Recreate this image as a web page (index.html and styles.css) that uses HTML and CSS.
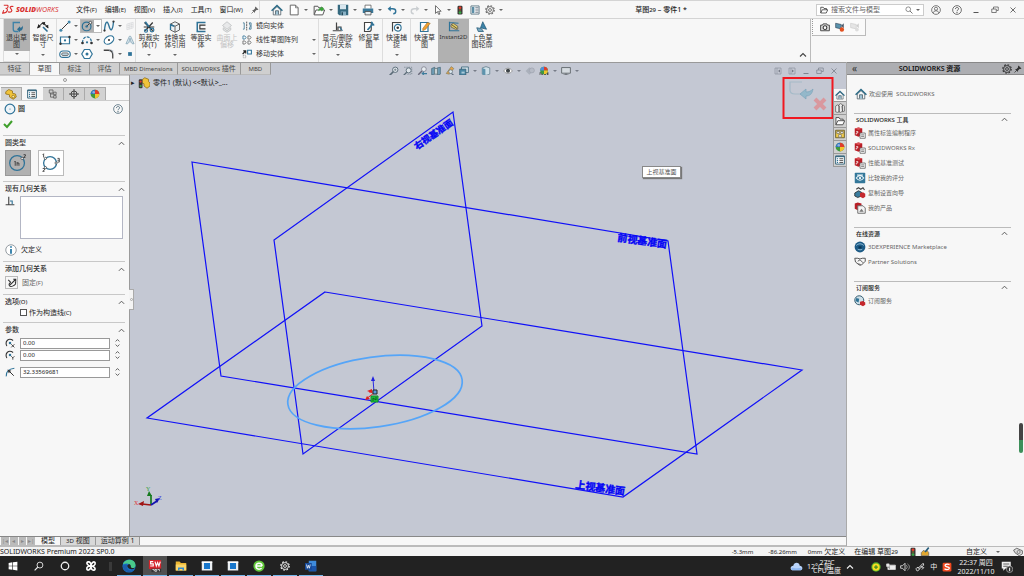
FILE: index.html
```html
<!DOCTYPE html>
<html lang="zh-CN">
<head>
<meta charset="utf-8">
<title>SOLIDWORKS Premium 2022</title>
<link rel="stylesheet" href="styles.css">
</head>
<body>
<svg class="defs" aria-hidden="true">
  <symbol id="home" viewBox="0 0 16 16"><path d="M3 8v6.500h10V8L8 3.500z" fill="#f4f6f7" stroke="#4a5860"/><path d="M.8 9L8 2l7.200 7" fill="none" stroke="#2b6a86" stroke-width="2"/><path d="M6 14V9h4v5" fill="#9fc4d6" stroke="#4a5860"/></symbol>
  <symbol id="new" viewBox="0 0 16 16"><path d="M3 1.500h7l3.500 3.500v9.500H3z" fill="#fff" stroke="#666" stroke-width="1.300"/><path d="M10 1.500V5h3.500" fill="none" stroke="#666"/></symbol>
  <symbol id="open" viewBox="0 0 16 16"><path d="M1.500 14V3h5l1 2H13v3" fill="#f6f6f6" stroke="#555" stroke-width="1.300"/><path d="M1.500 14.500L4 8h11.500L13 14.500z" fill="#fff" stroke="#555" stroke-width="1.300"/><path d="M7 10c0-4 2-5 4-5V3l4 3.500L11 10V8c-2 0-3 .5-4 2z" fill="#3aa53a"/></symbol>
  <symbol id="save" viewBox="0 0 16 16"><path d="M1 1h14v14H3l-2-2z" fill="#35697f"/><path d="M4 1h8v6H4z" fill="#d8e6ee"/><path d="M5 10h7v5H5z" fill="#8ab1c5"/><path d="M6 11h2v4H6z" fill="#234a5b"/></symbol>
  <symbol id="print" viewBox="0 0 16 16"><path d="M4 6V1.500h8V6" fill="#fff" stroke="#555"/><path d="M1 6h14v6H1z" fill="#3a7899"/><path d="M4 10h8v4.500H4z" fill="#e7f0f4" stroke="#444"/></symbol>
  <symbol id="undo" viewBox="0 0 16 16"><path d="M3 6h6c4 0 5 2 5 4s-1 4-4 4" fill="none" stroke="currentColor" stroke-width="2.200"/><path d="M1 6l5-4.500v9z" fill="currentColor"/></symbol>
  <symbol id="redo" viewBox="0 0 16 16"><path d="M13 6H7c-4 0-5 2-5 4s1 4 4 4" fill="none" stroke="#c9cdd0" stroke-width="2.200"/><path d="M15 6l-5-4.500v9z" fill="#c9cdd0"/></symbol>
  <symbol id="cursor" viewBox="0 0 16 16"><path d="M4 1l9 9H9l2 4.500-2 .5-2-4.500-3 3z" fill="#fff" stroke="#444" stroke-width="1.200"/></symbol>
  <symbol id="light" viewBox="0 0 16 16"><rect x="4" y="1" width="8" height="14" rx="2" fill="#3b3735"/><circle cx="8" cy="4.500" r="2.200" fill="#e33b2a"/><circle cx="8" cy="8" r="1.500" fill="#776a30"/><circle cx="8" cy="12" r="2.200" fill="#3aa545"/></symbol>
  <symbol id="options" viewBox="0 0 16 16"><path d="M1.500 1.500h13v13h-13z" fill="#fff" stroke="#55707e" stroke-width="1.400"/><path d="M3 3h4v10H3z" fill="#5c8ea6"/><path d="M8.500 4.500h5M8.500 8h5M8.500 11.500h5" stroke="#456" stroke-width="1.300"/></symbol>
  <symbol id="gear" viewBox="0 0 16 16"><circle cx="8" cy="8" r="5.500" fill="none" stroke="currentColor" stroke-width="1.400"/><circle cx="8" cy="8" r="6.800" fill="none" stroke="currentColor" stroke-width="1.800" stroke-dasharray="2.700 2.640"/><circle cx="8" cy="8" r="2.300" fill="none" stroke="currentColor" stroke-width="1.400"/></symbol>
  <symbol id="pin" viewBox="0 0 16 16"><path d="M9 1l6 6-2 1-2 0-3 3v3L2 8h3l3-3V3z" fill="currentColor"/><path d="M1 15l5-5" stroke="currentColor" stroke-width="1.500"/></symbol>
  <symbol id="exit" viewBox="0 0 16 16"><path d="M12 2H3v9c0 2 1 3 3 3h4" fill="none" stroke="#3d82a8" stroke-width="1.800"/><path d="M8 11l4-4v2c2 0 3-1 4-3 0 5-1 7-4 7v2z" fill="#2d6e92"/></symbol>
  <symbol id="dim" viewBox="0 0 16 16"><path d="M1 9l7-7 7 7" fill="none" stroke="#333" stroke-width="1.400"/><path d="M0 10l2-6 3 4zM6 3l5-2-1 5zM11 7l4-2v5z" fill="#222"/><path d="M8 8l6 6" stroke="#2d6e92" stroke-width="2.200"/></symbol>
  <symbol id="line" viewBox="0 0 16 16"><path d="M2 14L14 2" stroke="#333" stroke-width="1.300"/><circle cx="2.500" cy="13.500" r="2" fill="#4689ac"/><circle cx="13.500" cy="2.500" r="2" fill="#4689ac"/></symbol>
  <symbol id="circle" viewBox="0 0 16 16"><circle cx="8" cy="8" r="6.500" fill="#eef4f8" stroke="#2f7398" stroke-width="1.600"/><circle cx="8" cy="8" r=".8" fill="#2f7398"/></symbol>
  <symbol id="circle-r" viewBox="0 0 16 16"><circle cx="7.500" cy="8.500" r="5.800" fill="none" stroke="#2f7398" stroke-width="1.600"/><path d="M7.500 8.500l5-5" stroke="#333" stroke-width="1.200"/><circle cx="7.500" cy="8.500" r="1.600" fill="#2f7398"/><circle cx="12.500" cy="3.500" r="1.700" fill="#fff" stroke="#333"/></symbol>
  <symbol id="spline" viewBox="0 0 16 16"><path d="M2 14C3 1 6 0 8 8s5 7 6-6" fill="none" stroke="#2f7398" stroke-width="1.800"/><circle cx="2" cy="14" r="1.500" fill="#333"/><circle cx="14" cy="2" r="1.500" fill="#333"/></symbol>
  <symbol id="grid" viewBox="0 0 16 16"><path d="M3 5l10-3v9L3 14zM6.500 4v9M10 3v9M3 8l10-3M3 11l10-3" fill="none" stroke="#d3d6d8" stroke-width="1"/></symbol>
  <symbol id="rect" viewBox="0 0 16 16"><path d="M2 4h12v9H2z" fill="#fff" stroke="#2f7398" stroke-width="1.600"/><circle cx="2" cy="13" r="1.600" fill="#333"/><circle cx="14" cy="4" r="1.600" fill="#333"/><circle cx="8" cy="8.500" r="1.500" fill="#2f7398"/></symbol>
  <symbol id="arc" viewBox="0 0 16 16"><path d="M2 12C2 1 14 1 14 12" fill="none" stroke="#2f7398" stroke-width="1.600" stroke-dasharray="4 1.500"/><circle cx="2" cy="12" r="1.800" fill="#333"/><circle cx="14" cy="12" r="1.800" fill="#333"/><circle cx="8" cy="11" r="1.500" fill="#2f7398"/></symbol>
  <symbol id="ellipse" viewBox="0 0 16 16"><ellipse cx="8" cy="8" rx="7" ry="4.800" transform="rotate(-35 8 8)" fill="#fff" stroke="#2f7398" stroke-width="1.600"/><circle cx="8" cy="8" r="1.400" fill="#333"/></symbol>
  <symbol id="letter" viewBox="0 0 16 16"><path d="M1.500 14L7 2h2l5.500 12h-3l-1-3h-5l-1 3zM6.500 8.500h3L8 5z" fill="#dfeaf0" stroke="#6b93a8"/></symbol>
  <symbol id="slot" viewBox="0 0 16 16"><rect x="1" y="4" width="14" height="8.500" rx="4.200" fill="#fff" stroke="#2f7398" stroke-width="1.500"/><rect x="3.500" y="6.500" width="9" height="3.500" rx="1.700" fill="#b9d0dc" stroke="#555"/></symbol>
  <symbol id="poly" viewBox="0 0 16 16"><path d="M4.500 2h7L15 8l-3.500 6h-7L1 8z" fill="#fff" stroke="#2f7398" stroke-width="1.600"/><circle cx="8" cy="8" r="2" fill="#2f7398"/></symbol>
  <symbol id="fillet" viewBox="0 0 16 16"><path d="M1 3h6c5 0 6 3 6 6v5" fill="none" stroke="#444" stroke-width="1.700"/><path d="M8 3h5v5" fill="none" stroke="#9ab" stroke-dasharray="1.500 1"/></symbol>
  <symbol id="point" viewBox="0 0 16 16"><path d="M5 5h6v6H5z" fill="#2f7398"/></symbol>
  <symbol id="trim" viewBox="0 0 16 16"><path d="M2 2l11 11M13 2L3 13M1 8h14" stroke="#333" stroke-width="1.600"/><circle cx="4" cy="13" r="2" fill="none" stroke="#2f7398" stroke-width="1.600"/><circle cx="12" cy="12" r="2.500" fill="none" stroke="#2f7398" stroke-width="1.600"/><path d="M3 1l5 7" stroke="#2f7398" stroke-width="2.400"/></symbol>
  <symbol id="cube" viewBox="0 0 16 16"><path d="M2 4l6-3 6 3v8l-6 3-6-3z" fill="#eef2f4" stroke="#555" stroke-width="1.200"/><path d="M2 4l6 3 6-3M8 7v8" fill="none" stroke="#555" stroke-width="1.200"/><path d="M2 12V5l5 2" fill="none" stroke="#2f7398" stroke-width="1.800"/></symbol>
  <symbol id="offset" viewBox="0 0 16 16"><path d="M14 2H3v12h11" fill="none" stroke="#2f7398" stroke-width="2"/><path d="M14 5.500H6.500v5H14" fill="none" stroke="#333" stroke-width="1.500"/></symbol>
  <symbol id="surf" viewBox="0 0 16 16"><path d="M8 1l6 5-6 5-6-5zM3 9l5 4 5-4v3l-5 3-5-3z" fill="#e8e9ea" stroke="#c5c7c9" stroke-width="1.300"/></symbol>
  <symbol id="mirror" viewBox="0 0 16 16"><path d="M1.500 3h2v10h-2M14.500 3h-3l2 5-2 5h3z" fill="#fff" stroke="#3f7793" stroke-width="1.400"/><path d="M7.500 1v14" stroke="#444" stroke-width="1.400" stroke-dasharray="3 1"/></symbol>
  <symbol id="pattern" viewBox="0 0 16 16"><g fill="none" stroke="#666" stroke-width="1.300"><path d="M1.500 1.500h3l2 2.500-2 2.500h-3z" stroke="#2f7398"/><path d="M9.500 1.500h3l2 2.500-2 2.500h-3zM1.500 9.500h3l2 2.500-2 2.500h-3zM9.500 9.500h3l2 2.500-2 2.500h-3z"/></g></symbol>
  <symbol id="move" viewBox="0 0 16 16"><path d="M9 2h6v6H9z" fill="#fff" stroke="#2f7398" stroke-width="1.700"/><path d="M1 8l4-4M2 3h4v4" fill="none" stroke="#222" stroke-width="1.800"/><path d="M2 10h4v4H2z" fill="none" stroke="#777" stroke-dasharray="1.500 1"/></symbol>
  <symbol id="relate" viewBox="0 0 16 16"><path d="M6 2v10M1 13h12M8 12V8h4v4" fill="none" stroke="#444" stroke-width="1.600"/><path d="M10 8l4 5" stroke="#2f7398" stroke-width="1.500"/></symbol>
  <symbol id="perp" viewBox="0 0 16 16"><path d="M6 1v13M1 14h14" stroke="#444" stroke-width="1.800"/><path d="M8 8h3.500v5" fill="none" stroke="#2f7398" stroke-width="1.800"/></symbol>
  <symbol id="repair" viewBox="0 0 16 16"><path d="M2 2h9v9c0 2-1 3-3 3H2z" fill="#fff" stroke="#444" stroke-width="1.500"/><path d="M6 12l7-8M12 1a3 3 0 0 0 3 4" fill="none" stroke="#2f7398" stroke-width="2.400"/></symbol>
  <symbol id="snap" viewBox="0 0 16 16"><path d="M2 14V2h12" fill="none" stroke="#444" stroke-width="1.500"/><circle cx="9" cy="9" r="4.500" fill="#fff" stroke="#2f7398" stroke-width="1.500"/><circle cx="9" cy="9" r="1.700" fill="#333"/></symbol>
  <symbol id="rapid" viewBox="0 0 16 16"><path d="M2 2h10v12H2z" fill="#fff" stroke="#2f7398" stroke-width="1.600"/><path d="M5 10l6-8 4 1-6 8-4 2z" fill="#f0a030" stroke="#8a5b20" stroke-width=".6"/></symbol>
  <symbol id="instant" viewBox="0 0 16 16"><path d="M2 1v12h13M2 2l12 1" fill="none" stroke="#2f7398" stroke-width="1.600"/><path d="M4 5l3-2 6 4v4l-3 0-6-3z" fill="#e5cd64" stroke="#555"/><path d="M5 5l7 5" stroke="#333"/></symbol>
  <symbol id="shade" viewBox="0 0 16 16"><path d="M9 1l5 10-8-2z" fill="#3c83a8" stroke="#235a78"/><path d="M1 9l6 1 3 4H3z" fill="#78a8bf" stroke="#235a78"/></symbol>
  <symbol id="folder" viewBox="0 0 16 16"><path d="M1.500 14V2.500h5L8 5h5v3" fill="#fff" stroke="currentColor" stroke-width="1.400"/><path d="M1.500 14L4.500 7.500h11L12.500 14z" fill="#fff" stroke="currentColor" stroke-width="1.400"/></symbol>
  <symbol id="zoomlens" viewBox="0 0 16 16"><circle cx="6.500" cy="6.500" r="4.700" fill="none" stroke="currentColor" stroke-width="1.400"/><path d="M10 10l5 5" stroke="currentColor" stroke-width="1.800"/></symbol>
  <symbol id="zoomfit" viewBox="0 0 16 16"><circle cx="10" cy="6" r="4.300" fill="#dfe5ea" stroke="#5a6b77" stroke-width="1.500"/><path d="M7 9l-6 6" stroke="#5a6b77" stroke-width="2.400"/><path d="M8 6h4M10 4v4" stroke="#5a6b77"/></symbol>
  <symbol id="zoomarea" viewBox="0 0 16 16"><path d="M2 2h12v11H6" fill="none" stroke="#5a6b77" stroke-dasharray="2 1.500"/><circle cx="9" cy="7" r="4" fill="#dfe5ea" stroke="#5a6b77" stroke-width="1.400"/><path d="M6 10l-5 5" stroke="#5a6b77" stroke-width="2.200"/></symbol>
  <symbol id="user" viewBox="0 0 16 16"><circle cx="8" cy="8" r="7" fill="none" stroke="#555" stroke-width="1.200"/><circle cx="8" cy="6" r="2.500" fill="none" stroke="#555" stroke-width="1.200"/><path d="M3.500 13c0-5 9-5 9 0" fill="none" stroke="#555" stroke-width="1.200"/></symbol>
  <symbol id="help" viewBox="0 0 16 16"><circle cx="8" cy="8" r="7" fill="none" stroke="currentColor" stroke-width="1.300"/><path d="M5.500 6.500C5.500 3 10.800 3.300 10.500 6.300 10.400 8 8 8 8 10" fill="none" stroke="currentColor" stroke-width="1.500"/><circle cx="8" cy="12.200" r="1.100" fill="currentColor"/></symbol>
  <symbol id="min" viewBox="0 0 16 16"><path d="M3 13h10" stroke="currentColor" stroke-width="2"/></symbol>
  <symbol id="restore" viewBox="0 0 16 16"><path d="M1.500 6h9v7h-9zM5 6V2h9.500v7H11" fill="none" stroke="currentColor" stroke-width="1.500"/></symbol>
  <symbol id="close" viewBox="0 0 16 16"><path d="M3 3l10 10M13 3L3 13" stroke="currentColor" stroke-width="1.700"/></symbol>
  <symbol id="up" viewBox="0 0 16 16"><path d="M2 11l6-6 6 6" fill="none" stroke="currentColor" stroke-width="2.200"/></symbol>
  <symbol id="camera" viewBox="0 0 16 16"><path d="M1 5h3l1-2h6l1 2h3v9H1z" fill="#ddd" stroke="#444" stroke-width="1.500"/><circle cx="8" cy="9" r="3" fill="#fff" stroke="#333" stroke-width="1.700"/></symbol>
  <symbol id="video" viewBox="0 0 16 16"><path d="M1 2l9 2v7l-9-2z" fill="#5a93ae" stroke="#345"/><path d="M10 6l4-4v8z" fill="#456"/><circle cx="11" cy="12" r="3.500" fill="#e2501f"/></symbol>
  <symbol id="video-off" viewBox="0 0 16 16"><path d="M1 2l9 2v7l-9-2z" fill="#e5e5e5" stroke="#ccc"/><path d="M10 6l4-4v8z" fill="#ccc"/><circle cx="11" cy="12" r="3" fill="#ddd"/></symbol>
  <symbol id="part" viewBox="0 0 16 16"><path d="M1 5l4-3 5 2v3l4 1 1 4-4 3-5-3V9L1 8z" fill="#f0c33a" stroke="#8f6c14"/><circle cx="11" cy="11.500" r="1.800" fill="#fbe9a4" stroke="#8f6c14"/></symbol>
  <symbol id="part-light" viewBox="0 0 16 16"><path d="M5 4l4-3 5 2v3l2 2v4l-4 3-4-3V9L5 8z" fill="#f0c33a" stroke="#8f6c14"/><rect x="1" y="3" width="5" height="12" rx="1.500" fill="#3b3735"/><circle cx="3.500" cy="6" r="1.500" fill="#e33b2a"/><circle cx="3.500" cy="12" r="1.500" fill="#3aa545"/></symbol>
  <symbol id="props" viewBox="0 0 16 16"><path d="M1 1.500h14v13H1z" fill="#fff" stroke="#3c6a80" stroke-width="1.600"/><path d="M1 1.500h14v2H1z" fill="#3c6a80"/><path d="M3 6h2M3 9h2M3 12h2" stroke="#2f7398" stroke-width="1.800"/><path d="M7 6h6M7 9h6M7 12h6" stroke="#333" stroke-width="1.300"/></symbol>
  <symbol id="config" viewBox="0 0 16 16"><path d="M2 1.500h6v5H2zM9 5h4v4H9zM9 10.500h4v4H9zM4 6.500V13h5M4 8h5" fill="#ccc" stroke="#555" stroke-width="1.200"/></symbol>
  <symbol id="target" viewBox="0 0 16 16"><circle cx="8" cy="8" r="4.800" fill="none" stroke="#333" stroke-width="1.400"/><path d="M8 0v16M0 8h16" stroke="#333" stroke-width="1.400"/></symbol>
  <symbol id="ball" viewBox="0 0 16 16"><circle cx="8" cy="8" r="7" fill="#3e9a3e"/><path d="M8 8V1a7 7 0 0 1 7 7z" fill="#e13c2b"/><path d="M8 8V1a7 7 0 0 0-7 7z" fill="#3573c4"/><path d="M8 8h7a7 7 0 0 1-7 7z" fill="#f2c52d"/><circle cx="6" cy="5" r="2" fill="#fff" opacity=".45"/></symbol>
  <symbol id="scene" viewBox="0 0 16 16"><path d="M1 10h14v5H1z" fill="#444"/><path d="M2 12h2v2H2zM6 12h2v2H6zM11 12h2v2h-2z" fill="#ddd"/><circle cx="8" cy="7" r="6" fill="#3e9a3e"/><path d="M8 7V1a6 6 0 0 1 6 6z" fill="#e13c2b"/><path d="M8 7V1a6 6 0 0 0-6 6z" fill="#4f8fd8"/><path d="M8 7h6a6 6 0 0 1-6 6z" fill="#f2c52d"/></symbol>
  <symbol id="info" viewBox="0 0 16 16"><circle cx="8" cy="8" r="7" fill="#fff" stroke="#8a9299" stroke-width="1.200"/><path d="M8 6.500V13M8 3v2" stroke="#2a7aa6" stroke-width="2.400"/></symbol>
  <symbol id="fix" viewBox="0 0 16 16"><path d="M2 3l4 4M6 7c-5 3-2 8 3 6s6-5 4-7" fill="none" stroke="#333" stroke-width="1.700"/><path d="M5 11l9-9M10 2h4v4" fill="none" stroke="#333" stroke-width="1.700"/></symbol>
  <symbol id="center-x" viewBox="0 0 16 16"><path d="M3 13C-1 5 6-1 13 4" fill="none" stroke="#333" stroke-width="1.700"/><circle cx="8" cy="8" r="2" fill="#2f7398"/><path d="M10 10l5 5M15 10l-5 5" stroke="#333" stroke-width="1.400"/></symbol>
  <symbol id="center-y" viewBox="0 0 16 16"><path d="M3 13C-1 5 6-1 13 4" fill="none" stroke="#333" stroke-width="1.700"/><circle cx="8" cy="8" r="2" fill="#2f7398"/><path d="M10 10l2.500 2.500L15 10M12.500 12v3.500" fill="none" stroke="#333" stroke-width="1.400"/></symbol>
  <symbol id="radius" viewBox="0 0 16 16"><path d="M2 15C1 8 6 3 15 2" fill="none" stroke="#2f7398" stroke-width="1.800"/><path d="M14 14L6 6" stroke="#333" stroke-width="1.600"/><path d="M4 4l6 2-4 4z" fill="#333"/></symbol>
  <symbol id="section" viewBox="0 0 16 16"><path d="M1 4l5-2v11l-5 1zM10 3l5-1v11l-5 2z" fill="#6f9db5" stroke="#3d5f70"/><path d="M6 4h4v9H6z" fill="#dfe6ea" stroke="#566"/></symbol>
  <symbol id="prev" viewBox="0 0 16 16"><circle cx="11" cy="5" r="3.800" fill="#e7edf1" stroke="#667"/><path d="M8 8l-6 6" stroke="#667" stroke-width="2.200"/><path d="M16 11h-5V8.500L7 12l4 3.500V13h5z" fill="#3d7c9c"/></symbol>
  <symbol id="wand" viewBox="0 0 16 16"><path d="M2 12L10 1l4 3-7 9z" fill="#e8a54a" stroke="#775"/><path d="M7 9l7 6" stroke="#567" stroke-width="1.900"/><circle cx="9" cy="9" r="3" fill="#dce8ef" stroke="#567"/></symbol>
  <symbol id="boxes" viewBox="0 0 16 16"><path d="M4 1.500h11v9H4z" fill="#cfdfe7" stroke="#3c677d" stroke-width="1.300"/><path d="M1 5h10v9.500H1z" fill="#4c88a5" stroke="#2b5266"/><path d="M4 9h5v3H4z" fill="#aac9d8"/></symbol>
  <symbol id="solid" viewBox="0 0 16 16"><path d="M2 3l6-2 6 2v10l-6 2-6-2z" fill="#cfe0e8" stroke="#4b6c7c"/><path d="M2 3l5 2v10l-5-2z" fill="#5e93ad"/></symbol>
  <symbol id="eye" viewBox="0 0 16 16"><path d="M1 8c4-6 10-6 14 0-4 5-10 5-14 0z" fill="#fff" stroke="#777"/><circle cx="8" cy="7.500" r="3.300" fill="#3d4347"/></symbol>
  <symbol id="greyball" viewBox="0 0 16 16"><path d="M7 2l6 6-6 6-6-6z" fill="#aab0bb"/><circle cx="11" cy="7" r="4" fill="#b6bbc6" stroke="#9a9fab"/></symbol>
  <symbol id="screen" viewBox="0 0 16 16"><path d="M1 2.500h14v9H1z" fill="#d5dbe0" stroke="#5d6468" stroke-width="1.400"/><path d="M8 12v2M4 14.500h8" stroke="#5d6468" stroke-width="1.700"/></symbol>
  <symbol id="dock-l" viewBox="0 0 16 16"><path d="M2 2h12v12H2zM6 2v12" fill="none" stroke="#8a8f9b" stroke-width="1.300"/><path d="M12 5v6L8 8z" fill="#777c88"/></symbol>
  <symbol id="dock-r" viewBox="0 0 16 16"><path d="M2 2h12v12H2zM6 2v12" fill="none" stroke="#8a8f9b" stroke-width="1.300"/><path d="M8 5v6l4-3z" fill="#777c88"/></symbol>
  <symbol id="library" viewBox="0 0 16 16"><path d="M1 5l3-2 3 2v9l-3 1-3-1zM6 3l3-2 3 2v10l-3 2-3-1zM11 5l2-2 2 2v8l-3 1z" fill="#eee" stroke="#444"/></symbol>
  <symbol id="palette" viewBox="0 0 16 16"><path d="M1 2h14v12H1z" fill="#efcb4b" stroke="#665a29" stroke-width="1.400"/><path d="M3 4h4v3H3zM9 4h4v3H9zM6 9h4v4H6z" fill="#fff" stroke="#555"/></symbol>
  <symbol id="swtool" viewBox="0 0 16 16"><path d="M1 2l5-1.500L11 2v9l-5 2-5-2z" fill="#b81f27"/><path d="M1 2l5-1.500L11 2 6 4z" fill="#dc5257"/><path d="M3 6h2v2H3v2" fill="none" stroke="#fff"/><path d="M8 8h7v7H8z" fill="#fff" stroke="#666" stroke-width="1.100"/><path d="M9.500 10.500h4M9.500 12.500h4" stroke="#555"/></symbol>
  <symbol id="compare" viewBox="0 0 16 16"><rect x="1" y="1" width="14" height="14" rx="1" fill="#34789a"/><path d="M3 8c3-4 7-4 10 0-3 4-7 4-10 0zM4 4h8" fill="none" stroke="#e7f3f8" stroke-width="1.500"/><circle cx="8" cy="8" r="1.500" fill="#fff"/></symbol>
  <symbol id="copyset" viewBox="0 0 16 16"><path d="M3 3l3-2 3 2 3-2 2 3" fill="none" stroke="#444" stroke-width="1.500"/><path d="M1 8l5-3 4 2v5l-5 2-4-2z" fill="#3a7c9e" stroke="#222"/><path d="M8 8l4-1 3 2v4l-3 2-4-2z" fill="#c5272c"/></symbol>
  <symbol id="products" viewBox="0 0 16 16"><path d="M1 2l4-1.500L10 2v7l-5 2-4-2z" fill="#b81f27"/><path d="M5 5h7l3 3v7H5z" fill="#f3f3f3" stroke="#666" stroke-width="1.200"/><path d="M7 13l3-4 3 4z" fill="#777"/></symbol>
  <symbol id="globe" viewBox="0 0 16 16"><circle cx="8" cy="8" r="7.200" fill="#1d5b86"/><path d="M3 6c3-3 7-3 10 0M5 11c2 1 4 1 6 0" fill="none" stroke="#8dbad6" stroke-width="1.300"/><path d="M6 7h4v3H6z" fill="#0b3655"/></symbol>
  <symbol id="hands" viewBox="0 0 16 16"><path d="M1 3h4l3 1 3-1h4v4l-5 5-3 0-5-4z" fill="#f6f6f6" stroke="#555" stroke-width="1.300"/><path d="M5 7l3-2 4 4M6 10l3 2" fill="none" stroke="#555" stroke-width="1.200"/></symbol>
  <symbol id="subscribe" viewBox="0 0 16 16"><circle cx="7" cy="7" r="6" fill="#cfe0e8" stroke="#345c70" stroke-width="1.300"/><path d="M3 4l4 1-1 5-4-2z" fill="#2e7295"/><path d="M8 9l4-1 3 2v3l-3 2-4-2z" fill="#c5272c"/></symbol>
  <symbol id="win" viewBox="0 0 16 16"><path d="M1 3l6-1v5.500H1zM8 2l7-1v6.500H8zM1 8.500h6V14l-6-1zM8 8.500h7V15l-7-1z" fill="#fff"/></symbol>
  <symbol id="ring" viewBox="0 0 16 16"><circle cx="8" cy="8" r="5" fill="none" stroke="#eee" stroke-width="1.700"/></symbol>
  <symbol id="fan" viewBox="0 0 16 16"><g fill="none" stroke="#fff" stroke-width="2.200"><path d="M8 8C3 8 1 3 4 2.500s4 2 4 5.500zM8 8c0-5 5-7 5.500-4s-2 4-5.500 4zM8 8c5 0 7 5 4 5.500s-4-2-4-5.500zM8 8c0 5-5 7-5.500 4s2-4 5.500-4z"/></g></symbol>
  <symbol id="edge" viewBox="0 0 16 16"><circle cx="8" cy="8" r="7.500" fill="#1772c9"/><path d="M1 6C3-1 15-1 15.500 7c0 4-5 4-6 2 1-3-3-5-8.500-3z" fill="#49c98a"/><path d="M6 8c-1 4 3 7 8 4-5 6-13 2-13-4 2-2 4-2 6-1z" fill="#1c5ca8"/><path d="M6 8c1-3 4-2 4 0s1 3 5 2c-3 3-8 2-9-2z" fill="#222"/></symbol>
  <symbol id="swapp" viewBox="0 0 16 16"><path d="M1 1h14v10l-7 2-7-2z" fill="#d5242b"/><path d="M6 3H3v2.500h3V8H2.500M8 3l1.500 5L11 4l1.500 4L14 3" fill="none" stroke="#fff" stroke-width="1.300"/><path d="M4 11h11v4H4z" fill="#333"/><path d="M5 12h2v2M8 12h2v2H8zM11 12h2v2" fill="none" stroke="#fff" stroke-width=".8"/></symbol>
  <symbol id="explorer" viewBox="0 0 16 16"><path d="M1 2h5l2 2h7v10H1z" fill="#eeb733"/><path d="M1 6h14v8H1z" fill="#fbd66b"/><path d="M4 14v-4h8v4h-2v-2H6v2z" fill="#348cd1"/></symbol>
  <symbol id="appwin" viewBox="0 0 16 16"><path d="M1 2h14v12H1z" fill="#e9eef2"/><path d="M4 4h8v8H4z" fill="#1877cc"/><path d="M1 2h14v2H1z" fill="#fff"/></symbol>
  <symbol id="browser" viewBox="0 0 16 16"><circle cx="8" cy="8" r="7.500" fill="#62c93a"/><path d="M4 8h8M12 8c0-5-8-5-8 0s5 5 7.500 3" fill="none" stroke="#fff" stroke-width="2"/></symbol>
  <symbol id="word" viewBox="0 0 16 16"><path d="M5 1h10v14H5z" fill="#3e8bdc"/><path d="M5 8h10v7H5z" fill="#1b55ab"/><path d="M0 4h9v9H0z" fill="#174a98"/><path d="M2 6l1.200 5L4.500 7l1.300 4L7 6" fill="none" stroke="#fff"/></symbol>
  <symbol id="cloud" viewBox="0 0 20 14"><path d="M5 13C-1 13 0 6 5 6 6-1 15 0 15 6c5 0 6 7 0 7z" fill="#b9d4fa"/><path d="M5 13C1 13 1 9 4 9c5 2 9-1 14 1 0 2-1 3-3 3z" fill="#8fb8f2"/></symbol>
  <symbol id="shield" viewBox="0 0 16 16"><circle cx="8" cy="8" r="7.500" fill="#4fae2c"/><circle cx="8" cy="8" r="5.800" fill="#f7dd21"/><path d="M8 5v6M5 8h6" stroke="#3b8b23" stroke-width="2"/></symbol>
  <symbol id="battery" viewBox="0 0 16 16"><path d="M6 5h9v7H6zM1 3h4v4H1zM3 7v5h3" fill="#eee" stroke="#ddd" stroke-width="1.200"/></symbol>
  <symbol id="sound" viewBox="0 0 16 16"><path d="M1 6h3l4-4v12l-4-4H1z" fill="none" stroke="#ddd" stroke-width="1.400"/><path d="M10 5c2 2 2 4 0 6M12 3c4 3 4 7 0 10" fill="none" stroke="#aaa" stroke-width="1.300"/></symbol>
  <symbol id="link" viewBox="0 0 16 16"><path d="M2 12a2.500 2.500 0 1 1 4 1c-2 2-4 1-4-1zM5 10l8-8 1 3-7 6M9 7l5 2-3 3" fill="none" stroke="#ddd" stroke-width="1.500"/></symbol>
  <symbol id="sogou" viewBox="0 0 16 16"><rect x="1" y="1" width="14" height="14" rx="2" fill="#f1491f"/><path d="M12 4C5 2 3 6 7 7.500s6 1 4 3.500c-2 1.500-5 1-7 0" fill="none" stroke="#fff" stroke-width="2"/></symbol>
  <symbol id="notice" viewBox="0 0 16 16"><path d="M1 1h12v9H6l-3 3v-3H1z" fill="#eee"/><path d="M3 4h8M3 7h6" stroke="#333"/><circle cx="11.500" cy="11" r="4.300" fill="#333" stroke="#aaa"/><path d="M11.500 9v4.500" stroke="#fff" stroke-width="1.300"/></symbol>
  <symbol id="rebuild" viewBox="0 0 16 16"><path d="M2 14V9l4-4 3 3 2-3 3 4v5z" fill="#e2a72e" stroke="#555"/><path d="M8 8l6-7" stroke="#235a78" stroke-width="2.500"/></symbol>
  <symbol id="tag" viewBox="0 0 16 16"><path d="M1 5l5-3 9 4v5l-5 3-7-5z" fill="#ddd" stroke="#555" stroke-width="1.300"/><circle cx="9" cy="8" r="2.500" fill="none" stroke="#555"/></symbol>
</svg>

<header class="titlebar">
  <div class="brand">
    <svg class="ds" viewBox="0 0 20 18"><path d="M3 2h6c2 1 1 4-1 5M6 7c5 0 4 8-5 8l2-5" fill="none" stroke="#d9302f" stroke-width="1.800"/><path d="M19 4c-5-1-7 1-4 4s1 6-5 5" fill="none" stroke="#d9302f" stroke-width="2"/></svg>
    <span class="brand-name"><b>SOLID</b>WORKS</span>
  </div>
  <nav class="menu">
    <button>文件<small>(F)</small></button><button>编辑<small>(E)</small></button><button>视图<small>(V)</small></button><button>插入<small>(I)</small></button><button>工具<small>(T)</small></button><button>窗口<small>(W)</small></button>
    <button aria-label="固定菜单"><svg class="i8 grey"><use href="#pin"/></svg></button>
  </nav>
  <div class="quick">
    <button aria-label="主页"><svg class="i12"><use href="#home"/></svg></button>
    <button class="drop" aria-label="新建"><svg class="i12"><use href="#new"/></svg></button>
    <button class="drop" aria-label="打开"><svg class="i12"><use href="#open"/></svg></button>
    <button class="drop" aria-label="保存"><svg class="i12"><use href="#save"/></svg></button>
    <button class="drop" aria-label="打印"><svg class="i12"><use href="#print"/></svg></button>
    <button class="drop teal" aria-label="撤销"><svg class="i10"><use href="#undo"/></svg></button>
    <button class="drop" aria-label="重做"><svg class="i10"><use href="#redo"/></svg></button>
    <button class="drop" aria-label="选择"><svg class="i10"><use href="#cursor"/></svg></button>
    <button aria-label="重建模型"><svg class="i10"><use href="#light"/></svg></button>
    <button aria-label="文件属性"><svg class="i10"><use href="#options"/></svg></button>
    <button class="drop grey" aria-label="选项"><svg class="i10"><use href="#gear"/></svg></button>
  </div>
  <h1 class="doc-title">草图<small>29</small> – 零件1 *</h1>
  <label class="search"><svg class="i8"><use href="#folder"/></svg><input type="text" placeholder="搜索文件与模型" aria-label="搜索文件与模型"><svg class="i8 grey"><use href="#zoomlens"/></svg><i class="caret"></i></label>
  <div class="window-tools">
    <button aria-label="登录"><svg class="i10"><use href="#user"/></svg></button>
    <button aria-label="帮助"><svg class="i10"><use href="#help"/></svg></button>
    <button aria-label="最小化"><svg class="i8"><use href="#min"/></svg></button>
    <button aria-label="还原"><svg class="i8"><use href="#restore"/></svg></button>
    <button aria-label="关闭"><svg class="i8"><use href="#close"/></svg></button>
  </div>
</header>

<div class="ribbon-row">
  <div class="ribbon">
    <button class="tile exit"><span class="face"><svg class="i12"><use href="#exit"/></svg><span>退出草图</span></span><i class="caret"></i></button>
    <button class="tile"><svg class="i12"><use href="#dim"/></svg><span>智能尺寸</span><i class="caret"></i></button>
    <div class="sketch-grid">
      <button class="drop" aria-label="直线"><svg class="i12"><use href="#line"/></svg></button>
      <button class="drop picked" aria-label="圆"><svg class="i12"><use href="#circle-r"/></svg></button>
      <button class="drop" aria-label="样条曲线"><svg class="i12"><use href="#spline"/></svg></button>
      <button aria-label="基准面"><svg class="i10"><use href="#grid"/></svg></button>
      <button class="drop" aria-label="矩形"><svg class="i12"><use href="#rect"/></svg></button>
      <button class="drop" aria-label="圆弧"><svg class="i12"><use href="#arc"/></svg></button>
      <button class="drop" aria-label="椭圆"><svg class="i12"><use href="#ellipse"/></svg></button>
      <button aria-label="文字"><svg class="i10"><use href="#letter"/></svg></button>
      <button class="drop" aria-label="槽口"><svg class="i12"><use href="#slot"/></svg></button>
      <button aria-label="多边形"><svg class="i12"><use href="#poly"/></svg></button>
      <button class="drop" aria-label="圆角"><svg class="i12"><use href="#fillet"/></svg></button>
      <button aria-label="点"><svg class="i10"><use href="#point"/></svg></button>
    </div>
    <button class="tile"><svg class="i12"><use href="#trim"/></svg><span>剪裁实体(T)</span><i class="caret"></i></button>
    <button class="tile"><svg class="i12"><use href="#cube"/></svg><span>转换实体引用</span><i class="caret"></i></button>
    <button class="tile"><svg class="i12"><use href="#offset"/></svg><span>等距实体</span></button>
    <button class="tile" disabled><svg class="i12"><use href="#surf"/></svg><span>曲面上偏移</span></button>
    <div class="tool-list">
      <button><svg class="i10"><use href="#mirror"/></svg><span>镜向实体</span></button>
      <button><svg class="i10"><use href="#pattern"/></svg><span>线性草图阵列</span><i class="caret"></i></button>
      <button><svg class="i10"><use href="#move"/></svg><span>移动实体</span><i class="caret"></i></button>
    </div>
    <button class="tile wide"><svg class="i12"><use href="#relate"/></svg><span>显示/删除几何关系</span><i class="caret"></i></button>
    <button class="tile"><svg class="i12"><use href="#repair"/></svg><span>修复草图</span></button>
    <button class="tile ruled"><svg class="i12"><use href="#snap"/></svg><span>快速捕捉</span><i class="caret"></i></button>
    <button class="tile ruled"><svg class="i12"><use href="#rapid"/></svg><span>快速草图</span></button>
    <button class="tile on"><svg class="i12"><use href="#instant"/></svg><span>Instant2D</span></button>
    <button class="tile"><svg class="i12"><use href="#shade"/></svg><span>上色草图轮廓</span></button>
    <button class="collapse" aria-label="折叠工具栏"><svg class="i8"><use href="#up"/></svg></button>
  </div>
  <div class="capture">
    <button aria-label="截图"><svg class="i10"><use href="#camera"/></svg></button>
    <button aria-label="录制视频"><svg class="i10"><use href="#video"/></svg></button>
    <button aria-label="停止录制" disabled><svg class="i10"><use href="#video-off"/></svg></button>
  </div>
</div>

<main class="workspace">
  <section class="stage">
    <div class="stage-top">
      <nav class="tabs"><button>特征</button><button class="active">草图</button><button>标注</button><button>评估</button><button><small>MBD Dimensions</small></button><button><small>SOLIDWORKS</small>&nbsp;插件</button><button><small>MBD</small></button></nav>
      <div class="heads-up">
        <button aria-label="整屏显示全图"><svg class="i10"><use href="#zoomfit"/></svg></button>
        <button aria-label="局部放大"><svg class="i10"><use href="#zoomarea"/></svg></button>
        <button aria-label="上一视图"><svg class="i10"><use href="#prev"/></svg></button>
        <button aria-label="剖面视图"><svg class="i10"><use href="#section"/></svg></button>
        <button aria-label="动态注解"><svg class="i10"><use href="#wand"/></svg></button>
        <button class="drop" aria-label="视图定向"><svg class="i10"><use href="#boxes"/></svg></button>
        <button class="drop" aria-label="显示样式"><svg class="i10"><use href="#solid"/></svg></button>
        <button class="drop" aria-label="隐藏项目"><svg class="i10"><use href="#eye"/></svg></button>
        <button aria-label="编辑外观"><svg class="i10"><use href="#greyball"/></svg></button>
        <button class="drop" aria-label="应用布景"><svg class="i10"><use href="#scene"/></svg></button>
        <button class="drop" aria-label="视图设置"><svg class="i10"><use href="#screen"/></svg></button>
      </div>
      <div class="doc-window">
        <button aria-label="左侧停靠"><svg class="i8"><use href="#dock-l"/></svg></button>
        <button aria-label="右侧停靠"><svg class="i8"><use href="#dock-r"/></svg></button>
        <button aria-label="最小化文档"><svg class="i8"><use href="#min"/></svg></button>
        <button aria-label="还原文档"><svg class="i8"><use href="#restore"/></svg></button>
        <button aria-label="关闭文档"><svg class="i8"><use href="#close"/></svg></button>
      </div>
    </div>

    <div class="stage-body">
      <aside class="property">
        <div class="grip"><i></i></div>
        <nav class="panel-tabs">
          <button aria-label="设计树"><svg class="i12"><use href="#part"/></svg></button>
          <button class="active" aria-label="属性"><svg class="i10"><use href="#props"/></svg></button>
          <button aria-label="配置"><svg class="i10"><use href="#config"/></svg></button>
          <button aria-label="尺寸专家"><svg class="i10"><use href="#target"/></svg></button>
          <button aria-label="外观"><svg class="i10"><use href="#ball"/></svg></button>
        </nav>
        <div class="panel-title"><svg class="i12"><use href="#circle"/></svg><h2>圆</h2><button aria-label="面板帮助"><svg class="i10 slate"><use href="#help"/></svg></button></div>
        <button class="confirm" aria-label="确定"><svg class="i10"><path d="M1 5l3 3 5-6" fill="none" stroke="#3fa02c" stroke-width="2"/></svg></button>
        <section class="group">
          <h3>圆类型<svg class="i8"><use href="#up"/></svg></h3>
          <div class="types">
            <button class="on" aria-label="圆"><svg viewBox="0 0 26 26"><circle cx="12" cy="13" r="8" fill="none" stroke="#2f7398" stroke-width="1.400"/><circle cx="17.500" cy="8" r="1.300" fill="#fff" stroke="#333" stroke-width=".7"/><path d="M9 12l1-1v5M12 16v-4M12 13h2v3M19 4h2v1.500l-2 1.500h2" fill="none" stroke="#333" stroke-width=".9"/></svg></button>
            <button aria-label="周边圆"><svg viewBox="0 0 26 26"><circle cx="12" cy="13" r="7" fill="none" stroke="#2f7398" stroke-width="1.400"/><g fill="#fff" stroke="#333" stroke-width=".7"><circle cx="7" cy="8" r="1.200"/><circle cx="7" cy="18" r="1.200"/><circle cx="18.500" cy="13" r="1.200"/></g><path d="M4 4l1-1v4M4 19h2v1.500l-2 1.500h2M20 8h2v4h-2M20 10h2" fill="none" stroke="#333" stroke-width=".9"/></svg></button>
          </div>
        </section>
        <section class="group">
          <h3>现有几何关系<svg class="i8"><use href="#up"/></svg></h3>
          <div class="row top"><svg class="i10"><use href="#perp"/></svg><textarea aria-label="现有几何关系"></textarea></div>
          <p class="row state"><svg class="i12"><use href="#info"/></svg><span>欠定义</span></p>
        </section>
        <section class="group">
          <h3>添加几何关系<svg class="i8"><use href="#up"/></svg></h3>
          <button class="row fix"><span class="fix-icon"><svg class="i10"><use href="#fix"/></svg></span><span>固定<small>(F)</small></span></button>
        </section>
        <section class="group">
          <h3><span>选项<small>(O)</small></span><svg class="i8"><use href="#up"/></svg></h3>
          <label class="check"><input type="checkbox"><span>作为构造线<small>(C)</small></span></label>
        </section>
        <section class="group params">
          <h3>参数<svg class="i8"><use href="#up"/></svg></h3>
          <label class="row"><svg class="i10"><use href="#center-x"/></svg><input type="text" value="0.00" aria-label="X 坐标"><span class="spin"><svg><use href="#up"/></svg><svg class="down"><use href="#up"/></svg></span></label>
          <label class="row"><svg class="i10"><use href="#center-y"/></svg><input type="text" value="0.00" aria-label="Y 坐标"><span class="spin"><svg><use href="#up"/></svg><svg class="down"><use href="#up"/></svg></span></label>
          <label class="row last"><svg class="i10"><use href="#radius"/></svg><input type="text" value="32.33569681" aria-label="半径"><span class="spin"><svg><use href="#up"/></svg><svg class="down"><use href="#up"/></svg></span></label>
        </section>
      </aside>

      <div class="viewport">
        <svg class="model" viewBox="130 75 716 461" role="img" aria-label="草图视图">
          <g fill="none" stroke="#1010f8" stroke-width="1.200">
            <path d="M192 162L668 241L697 454L221 376z"/>
            <path d="M453 112L482 326L303 454L274 240z"/>
            <path d="M325 292L802 370L623 497L147 418z"/>
          </g>
          <ellipse cx="375" cy="392" rx="88" ry="35" transform="rotate(-8 375 392)" fill="none" stroke="#55a5f8" stroke-width="1.700"/>
          <g class="plane-name">
            <text font-size="9" transform="translate(417 150) rotate(-35)">右视基准面</text>
            <text font-size="10" transform="translate(617 241) rotate(8)">前视基准面</text>
            <text font-size="10" transform="translate(575 488) rotate(8)">上视基准面</text>
          </g>
          <g fill="none">
            <path d="M374 392l-1-13" stroke="#2a2ae0"/><path d="M371 381l2-5 2 5z" fill="#2020e0"/>
            <path d="M374 392h-5M374 393l-8 6" stroke="#e02020"/><path d="M372 389l-5 2 5 2zM365 400l2-4 3 3z" fill="#e02020"/>
            <path d="M373 390h4v4h-4z" fill="#5a9be0" stroke="#222"/>
            <path d="M371 396h7v6h-7z" fill="#16c23a" stroke="#148a2c"/><path d="M373 401v-3l3 2v-3" stroke="#145a24"/>
          </g>
          <g stroke-width="1.700">
            <path d="M151 505v-10" stroke="#167a1e"/><path d="M147 496l2-5 3 5z" fill="#167a1e"/>
            <path d="M151 505l-9-1" stroke="#a01414"/><path d="M144 501l-6 3 5 2z" fill="#a01414"/>
            <path d="M151 505l6-4" stroke="#1414b0"/><path d="M155 499l5-1-3 5z" fill="#1414b0"/>
          </g>
          <g class="axis"><text x="146" y="491" fill="#36a044">Y</text><text x="134" y="505" fill="#e03030">X</text><text x="158" y="500" fill="#3030e0">Z</text></g>
          <path d="M802 82h-12v8c0 3 2 4 5 4h6" fill="none" stroke="#a5bac8" stroke-width="1.200"/><path d="M800 94l6-5v3c3 0 5-1 7-3-1 5-3 7-7 7v3z" fill="#94b8ca" stroke="#7da5ba" stroke-width=".7"/>
          <path d="M815 99l10 10M825 99l-10 10" stroke="#d9989e" stroke-width="4"/>
          <path d="M783.500 78h49v40h-49z" fill="none" stroke="#f01820" stroke-width="2"/>
        </svg>
        <button class="crumb"><span>▸</span><svg class="i12"><use href="#part-light"/></svg>零件1 (默认) &lt;&lt;默认&gt;_...</button>
        <button class="edge-grip" aria-label="隐藏面板"><i></i></button>
        <div class="tooltip" role="tooltip">上视基准面</div>
        <nav class="side-tabs">
          <button class="active" aria-label="资源"><svg class="i10"><use href="#home"/></svg></button>
          <button aria-label="设计库"><svg class="i10"><use href="#library"/></svg></button>
          <button aria-label="文件探索器"><svg class="i10"><use href="#folder"/></svg></button>
          <button aria-label="视图调色板"><svg class="i10"><use href="#palette"/></svg></button>
          <button aria-label="外观布景"><svg class="i10"><use href="#ball"/></svg></button>
          <button aria-label="自定义属性"><svg class="i10"><use href="#props"/></svg></button>
        </nav>
      </div>
    </div>

    <nav class="model-tabs">
      <div class="nav-arrows"><button aria-label="第一个">|◂</button><button aria-label="上一个">◂</button><button aria-label="下一个">▸</button><button aria-label="最后一个">▸|</button></div>
      <button class="active">模型</button><button><small>3D</small>&nbsp;视图</button><button>运动算例 1</button>
    </nav>
  </section>

  <aside class="task-pane">
    <div class="pane-head"><button class="fold" aria-label="折叠任务窗格">«</button><h2>SOLIDWORKS 资源</h2><button aria-label="窗格选项"><svg class="i10"><use href="#gear"/></svg></button><button aria-label="固定窗格"><svg class="i8"><use href="#pin"/></svg></button></div>
    <a class="link welcome" href="#"><svg class="i12"><use href="#home"/></svg>欢迎使用&nbsp; SOLIDWORKS</a>
    <section><h3>SOLIDWORKS 工具<svg class="i8"><use href="#up"/></svg></h3>
      <a class="link" href="#"><svg class="i12"><use href="#swtool"/></svg>属性标签编制程序</a>
      <a class="link" href="#"><svg class="i12"><use href="#swtool"/></svg>SOLIDWORKS Rx</a>
      <a class="link" href="#"><svg class="i12"><use href="#swtool"/></svg>性能基准测试</a>
      <a class="link" href="#"><svg class="i12"><use href="#compare"/></svg>比较我的评分</a>
      <a class="link" href="#"><svg class="i12"><use href="#copyset"/></svg>复制设置向导</a>
      <a class="link" href="#"><svg class="i12"><use href="#products"/></svg>我的产品</a>
    </section>
    <section><h3>在线资源<svg class="i8"><use href="#up"/></svg></h3>
      <a class="link" href="#"><svg class="i12"><use href="#globe"/></svg>3DEXPERIENCE Marketplace</a>
      <a class="link" href="#"><svg class="i12"><use href="#hands"/></svg>Partner Solutions</a>
    </section>
    <section><h3>订阅服务<svg class="i8"><use href="#up"/></svg></h3>
      <a class="link" href="#"><svg class="i12"><use href="#subscribe"/></svg>订阅服务</a>
    </section>
    <div class="level"></div>
  </aside>
</main>

<footer class="status">
  <span class="product">SOLIDWORKS Premium 2022 SP0.0</span>
  <small>-5.3mm</small><small class="coord-y">-86.26mm</small><span class="coord-z"><small>0mm</small> 欠定义</span><span class="editing">在编辑 草图<small>29</small></span>
  <svg class="i10"><use href="#light"/></svg><svg class="i10"><use href="#rebuild"/></svg>
  <button class="custom">自定义<i class="caret"></i></button><svg class="i10"><use href="#tag"/></svg>
</footer>

<footer class="taskbar">
  <nav class="apps">
    <button aria-label="开始"><svg class="i10"><use href="#win"/></svg></button>
    <button aria-label="搜索"><svg class="i10 mirror"><use href="#zoomlens"/></svg></button>
    <button aria-label="助手"><svg class="i12"><use href="#ring"/></svg></button>
    <button aria-label="风扇"><svg class="i12"><use href="#fan"/></svg></button>
    <i class="divider"></i>
    <button class="run" aria-label="Edge"><svg class="i14"><use href="#edge"/></svg></button>
    <button class="run current" aria-label="SOLIDWORKS"><svg class="i14"><use href="#swapp"/></svg></button>
    <button class="run" aria-label="资源管理器"><svg class="i12"><use href="#explorer"/></svg></button>
    <button class="run" aria-label="窗口一"><svg class="i12"><use href="#appwin"/></svg></button>
    <button class="run" aria-label="窗口二"><svg class="i12"><use href="#appwin"/></svg></button>
    <button class="run" aria-label="浏览器"><svg class="i12"><use href="#browser"/></svg></button>
    <button class="run" aria-label="设置"><svg class="i10"><use href="#gear"/></svg></button>
    <button class="run" aria-label="Word"><svg class="i12"><use href="#word"/></svg></button>
  </nav>
  <div class="weather"><svg class="cloud"><use href="#cloud"/></svg><span>12°C 阴</span><span class="cpu">27℃<br>CPU温度</span></div>
  <div class="tray">
    <button aria-label="显示隐藏图标"><svg class="i8"><use href="#up"/></svg></button>
    <button aria-label="安全"><svg class="i10"><use href="#shield"/></svg></button>
    <button aria-label="电源"><svg class="i10"><use href="#battery"/></svg></button>
    <button aria-label="音量"><svg class="i10"><use href="#sound"/></svg></button>
    <button aria-label="触笔"><svg class="i10"><use href="#link"/></svg></button>
    <button>中</button>
    <button aria-label="输入法"><svg class="i10"><use href="#sogou"/></svg></button>
  </div>
  <time class="clock">22:37 周四<br>2022/11/10</time>
  <button class="notice" aria-label="通知"><svg class="i12"><use href="#notice"/></svg></button>
</footer>
</body>
</html>
```

FILE: styles.css
```css
* { box-sizing: border-box; }
body {
  margin: 0;
  min-height: 100vh;
  display: flex;
  flex-direction: column;
  background: #f7f7f7;
  color: #222;
  font: 7px/8px "Noto Sans", "Noto Sans CJK SC", sans-serif;
}
button, input, textarea { font: inherit; color: inherit; }
button { border: 0; background: none; padding: 0; display: flex; align-items: center; justify-content: center; white-space: nowrap; }
h1, h2, h3, p { margin: 0; font-size: 7px; font-weight: 500; }
small { font-size: 6px; }
svg { display: block; flex: none; }
a { color: inherit; text-decoration: none; }
.defs { position: absolute; width: 0; height: 0; }
.i8 { width: 8px; height: 8px; }
.i10 { width: 10px; height: 10px; }
.i12 { width: 12px; height: 12px; }
.i14 { width: 14px; height: 14px; }
.grey { color: #666; }
.slate { color: #55707f; }
.teal { color: #2f7398; }
.mirror { transform: scaleX(-1); }
.caret, .drop::after { content: ""; width: 0; height: 0; flex: none; border: 2px solid transparent; border-top-color: #666; border-bottom: 0; }
.drop { gap: 4px; }

/* title bar */
.titlebar { height: 19px; display: flex; align-items: center; border-top: 1px solid #d4d4d4; border-bottom: 1px solid #d4d4d4; }
.brand { width: 76px; display: flex; align-items: center; gap: 2px; padding-left: 2px; color: #d9302f; }
.ds { width: 12px; height: 11px; }
.brand-name { font-family: "Open Sans", sans-serif; font-style: italic; }
.brand-name b { font-weight: 800; }
.menu { display: flex; gap: 8px; width: 184px; height: 17px; border-right: 1px solid #ddd; }
.quick { display: flex; align-items: center; justify-content: space-between; width: 232px; margin-left: 11px; }
.doc-title { flex: 1; text-align: center; padding-left: 3px; }
.search { width: 108px; height: 12px; display: flex; align-items: center; gap: 3px; padding: 0 3px; background: #fff; border: 1px solid #ccc; }
.search input { flex: 1; min-width: 0; border: 0; padding: 0; background: none; outline: 0; }
.search input::placeholder { color: #666; opacity: 1; }
.window-tools { display: flex; align-items: center; justify-content: space-between; width: 86px; margin: 0 7px; color: #555; }

/* ribbon */
.ribbon-row { display: flex; height: 43px; }
.ribbon { flex: 1; display: flex; padding-left: 3px; border-right: 1px solid #bbb; }
.capture { width: 54px; height: 17px; margin: 0 158px 0 1px; display: flex; align-items: center; gap: 5px; padding-left: 7px; border: 1px solid #bbb; border-top: 0; border-left: 1px dotted #999; background: #fafafa; }
.tile { width: 26px; display: flex; flex-direction: column; justify-content: flex-start; gap: 1px; padding-top: 2px; line-height: 7px; color: #333; }
.tile span { white-space: normal; width: 23px; }
.tile .caret { margin-top: auto; margin-bottom: 6px; }
.tile.wide { width: 38px; border-left: 1px solid #ddd; }
.tile.wide span { width: 33px; }
.tile.ruled { width: 28px; border-left: 1px solid #ddd; }
.tile.on { width: 31px; background: #b1b1b1; }
.tile.on span { width: 31px; font-size: 6px; }
.tile:disabled { color: #c3c3c3; }
.tile.exit { width: 27px; padding: 0; border: 1px solid #ddd; border-top: 0; }
.exit .face { height: 32px; width: 26px; display: flex; flex-direction: column; align-items: center; gap: 1px; padding-top: 2px; background: #b1b1b1; }
.exit .face span { width: 21px; }
.sketch-grid { width: 80px; display: grid; grid-template-columns: 22px 22px 22px 12px; grid-template-rows: repeat(3, 14px); align-items: center; padding-left: 1px; border: solid #ddd; border-width: 0 1px; }
.sketch-grid button { justify-content: flex-start; height: 14px; padding-left: 1px; gap: 3px; }
.sketch-grid .picked { background: linear-gradient(90deg, #b1b1b1 14px, #fff 14px); outline: 1px solid #bbb; outline-offset: -1px; }
.tool-list { width: 78px; padding: 0 2px; display: grid; grid-template-rows: repeat(3, 14px); }
.tool-list button { justify-content: flex-start; gap: 4px; color: #333; }
.tool-list .caret { margin-left: auto; }
.collapse { margin-left: auto; align-self: flex-end; margin-right: 3px; margin-bottom: 3px; color: #444; }

/* workspace */
.workspace { flex: 1; display: flex; min-height: 0; }
.stage { flex: 1; min-width: 0; display: flex; flex-direction: column; }
.stage-top { height: 13px; display: flex; align-items: center; background: #c4c8d3; border-top: 1px solid #999; }
.tabs { display: flex; height: 12px; background: #cfcfcf; }
.tabs button { min-width: 30px; padding: 0 4px; border-right: 1px solid #999; border-bottom: 1px solid #bbb; color: #444; }
.tabs .active { background: #f7f7f7; border-bottom-color: #f7f7f7; }
.heads-up { display: flex; gap: 4px; margin: 4px 0 0 auto; }
.heads-up .drop::after { border-top-color: #777c88; }
.doc-window { display: flex; gap: 6px; width: 72px; margin: 4px 0 0 195px; color: #7e8490; }
.stage-body { flex: 1; display: flex; }

.property { width: 130px; border-right: 1px solid #9b9b9b; background: #f7f7f7; }
.grip { height: 10px; display: flex; align-items: center; justify-content: center; border-bottom: 1px solid #ccc; border-top: 1px solid #ccc; }
.grip i { width: 4px; height: 4px; border: 1px solid #999; border-radius: 50%; }
.panel-tabs { height: 16px; display: flex; padding: 2px 0 0 1px; border-bottom: 1px solid #ccc; }
.panel-tabs button { width: 21px; border: solid #aaa; border-width: 1px 1px 0 0; background: #d2d2d2; }
.panel-tabs .active { background: #f7f7f7; border-color: #f7f7f7; }
.panel-title { display: flex; align-items: center; gap: 2px; height: 16px; padding: 0 6px 0 4px; }
.panel-title button { margin-left: auto; }
.confirm { margin: 2px 0 6px 3px; }
.group { margin: 0 4px 0 3px; padding-left: 2px; border-top: 1px solid #c8c8c8; }
.group h3 { height: 14px; display: flex; align-items: center; justify-content: space-between; color: #333; }
.group h3 svg { width: 7px; height: 7px; color: #555; }
.types { display: flex; gap: 7px; padding-bottom: 5px; }
.types button { width: 26px; height: 26px; border: 1px solid #bbb; background: #fff; }
.types svg { width: 24px; height: 24px; }
.types .on { background: #b1b1b1; border-color: #999; }
.row { display: flex; align-items: center; gap: 4px; }
.row.top { align-items: flex-start; }
.row textarea { flex: 1; height: 43px; margin: 0 2px 0 1px; padding: 0; border: 1px solid #b3b6c4; background: #fff; resize: none; }
.state { height: 22px; font-weight: 400; }
.fix { height: 18px; padding-bottom: 5px; color: #666; }
.fix-icon { width: 13px; height: 13px; display: grid; place-items: center; border: 1px solid #bbb; }
.check { height: 13px; padding-left: 15px; display: flex; gap: 2px; }
.check input { appearance: none; width: 7px; height: 7px; margin: 0; border: 1px solid #555; background: #fff; }
.params .row { height: 12px; gap: 5px; padding-right: 5px; }
.params input { flex: 1; min-width: 0; height: 11px; padding: 0 2px; border: 1px solid #999; background: #fff; font-size: 6px; }
.params .last { margin-top: 5px; }
.params .row .spin { width: 5px; }
.spin svg { width: 5px; height: 5px; }
.down { transform: rotate(180deg); }

.viewport { flex: 1; position: relative; background: #c4c8d3; min-height: 461px; }
.model { position: absolute; width: 100%; height: 100%; }
.plane-name { fill: #0505f5; stroke: #0505f5; stroke-width: .4px; font-family: "Noto Sans CJK SC", sans-serif; font-weight: 700; }
.axis { font: 6px "Liberation Serif", serif; }
.crumb { position: absolute; left: 1px; top: 2px; gap: 3px; }
.edge-grip { position: absolute; left: -1px; top: 214px; width: 5px; height: 21px; background: #f4f4f4; border: 1px solid #aaa; border-left: 0; }
.edge-grip i { width: 3px; height: 3px; border: 1px solid #aaa; border-radius: 50%; }
.tooltip { position: absolute; left: 512px; top: 91px; width: 39px; height: 12px; border: 1px solid #888; background: #fff; box-shadow: 1px 1px 1px #777; color: #555; font-size: 6px; line-height: 10px; text-align: center; }
.side-tabs { position: absolute; right: 0; top: 14px; width: 13px; }
.side-tabs button { width: 13px; height: 13px; background: #d0d0d0; border: solid #999; border-width: 0 0 1px 1px; color: #444; }
.side-tabs .active { background: #f7f7f7; }

.model-tabs { height: 10px; display: flex; border-top: 1px solid #888; border-bottom: 1px solid #bbb; }
.model-tabs > button { padding: 0 5px; border-right: 1px solid #999; background: #d8d8d8; }
.model-tabs .active { background: #f7f7f7; }
.nav-arrows { display: flex; width: 36px; gap: 1px; padding: 0 1px; }
.nav-arrows button { flex: 1; overflow: hidden; background: #bbb; color: #888; font-size: 6px; }

/* task pane */
.task-pane { width: 178px; position: relative; border-left: 1px solid #aaa; background: #f7f7f7; color: #333; }
.pane-head { height: 13px; display: flex; align-items: center; gap: 2px; padding: 0 2px 0 5px; background: #adaeb2; border: solid #888; border-width: 1px 0; }
.pane-head h2 { flex: 1; text-align: center; font-weight: 600; color: #111; }
.fold { font-size: 10px; padding-bottom: 2px; }
.link { height: 15px; display: flex; align-items: center; gap: 2px; color: #666; font-size: 6px; }
.welcome { height: 38px; padding: 0 8px; }
.task-pane section { margin: 0 13px 12px 7px; border-top: 1px solid #bbb; }
.task-pane h3 { height: 11px; display: flex; align-items: center; justify-content: space-between; padding: 0 3px 0 2px; font-size: 6px; color: #222; }
.task-pane h3 svg { width: 7px; height: 7px; color: #555; }
.level { position: absolute; right: 1px; top: 361px; width: 4px; height: 30px; border-radius: 2px; background: linear-gradient(#444 55%, #3d8f5a 55%); }

.status { height: 10px; display: flex; align-items: center; background: #f3f3f3; border-top: 1px solid #bbb; padding-right: 1px; }
.product { flex: 1; }
.coord-y { margin-left: 15px; }
.coord-z { margin-left: 11px; }
.editing { margin: 0 8px 0 9px; }
.status svg { margin-left: 2px; }
.custom { gap: 9px; margin: 0 11px 0 36px; }

.taskbar { height: 21px; display: flex; align-items: center; background: #222; color: #eee; }
.apps { display: flex; height: 100%; }
.apps button { width: 24px; margin: 0 1px; border-bottom: 2px solid transparent; }
.apps .run { border-bottom-color: #76b9ed; }
.apps .current { background: #505050; }
.divider { width: 3px; margin: 6px 4px 6px 5px; background: #3a3a3a; }
.weather { position: relative; display: flex; align-items: center; gap: 4px; margin-left: auto; width: 56px; }
.cloud { width: 13px; height: 9px; }
.cpu { position: absolute; left: 22px; width: 30px; text-align: center; }
.tray { display: flex; align-items: center; justify-content: space-between; width: 106px; }
.tray button:first-child { margin-right: 12px; }
.clock { width: 48px; text-align: center; line-height: 9px; }
.notice { width: 24px; justify-content: flex-start; padding-left: 1px; }
```
